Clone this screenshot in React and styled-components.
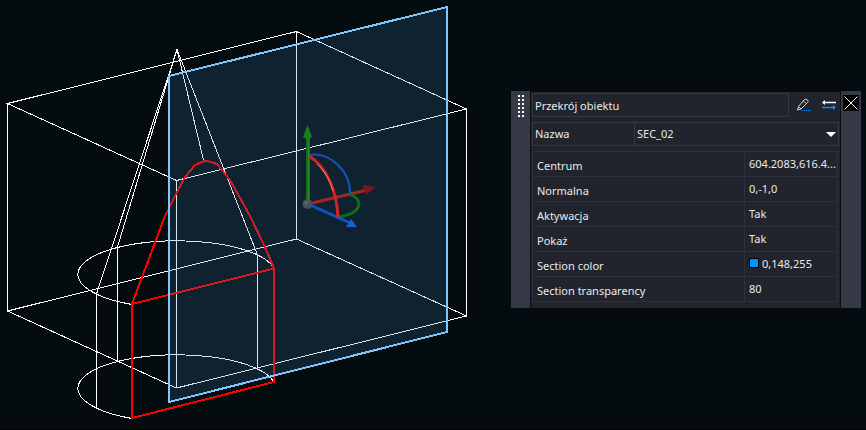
import React from "react";
import styled, { createGlobalStyle } from "styled-components";

const GlobalStyle = createGlobalStyle`
  * {
    box-sizing: border-box;
  }

  body {
    margin: 0;
    background: #040c0f;
    color: #e8eaee;
    font: 11px/16px "Noto Sans", "Open Sans", sans-serif;
  }
`;

const Viewport = styled.main`
  display: flex;
  align-items: flex-start;
  min-height: 100vh;
  padding-right: 5px;
  border-bottom: 1px solid #000;
`;

const Scene = styled.svg`
  display: block;
  flex: 1;
  min-width: 0;
  fill: none;
`;

const Wire = styled.path`
  stroke: #fff;
  stroke-width: 1;
  shape-rendering: crispEdges;
`;

const Cut = styled.path`
  stroke: #f00;
  stroke-width: 2;
  shape-rendering: crispEdges;
`;

const Plane = styled.path`
  fill: #377fb0;
  fill-opacity: 0.2;
`;

const PlaneEdge = styled.path`
  stroke: #7fc6ff;
  stroke-width: 2;
  shape-rendering: crispEdges;
`;

const Axis = styled.path`
  stroke: ${props => props.color};
  stroke-width: ${props => props.width || 3};
`;

const Palette = styled.aside`
  display: flex;
  flex: 0 0 350px;
  margin-top: 91px;
`;

const Strip = styled.div`
  display: flex;
  flex: 0 0 ${props => props.size};
  justify-content: center;
  align-items: flex-start;
  padding-top: 4px;
  background: #363a46;
`;

const Content = styled.div`
  display: flex;
  flex: 1;
  flex-direction: column;
  min-width: 0;
  gap: 5px;
  padding: 1px 1px 6px;
  border: 1px solid #0b0d11;
  border-width: 1px 1px 0;
  background: #21242c;
`;

const Header = styled.div`
  display: flex;
  align-items: center;
  gap: 5px;
`;

const TitleBox = styled.input`
  flex: 1;
  min-width: 0;
  height: 24px;
  padding: 0 2px;
  border: 1px solid #363944;
  background: transparent;
  color: inherit;
  font: inherit;
`;

const IconButton = styled.button`
  display: flex;
  justify-content: center;
  align-items: center;
  width: 20px;
  height: 20px;
  padding: 0;
  border: 0;
  background: transparent;
`;

const CloseButton = styled(IconButton)`
  width: 16px;
  height: 16px;
  background: #000;
`;

const NameRow = styled.div`
  display: flex;
  height: 24px;
  border: 1px solid #363944;
`;

const NameLabel = styled.label`
  flex: 0 0 102px;
  padding: 3px 2px;
  border-right: 1px solid #363944;
`;

const SelectBox = styled.div`
  display: grid;
  flex: 1;
  align-items: center;

  > * {
    grid-area: 1 / 1;
  }

  > svg {
    justify-self: end;
    margin-right: 2px;
    pointer-events: none;
  }
`;

const Select = styled.select`
  width: 100%;
  height: 22px;
  padding: 0 2px;
  border: 0;
  appearance: none;
  background: transparent;
  color: inherit;
  font: inherit;
`;

const Properties = styled.table`
  width: calc(100% - 1px);
  border-collapse: collapse;
  table-layout: fixed;
`;

const Name = styled.th`
  height: 25px;
  padding: 5px 4px 2px;
  border: 1px solid #2e313b;
  font-weight: 400;
  text-align: left;
`;

const Value = styled.td`
  width: 93px;
  height: 25px;
  padding: 3px 3px 4px 4px;
  border: 1px solid #2e313b;
  white-space: nowrap;
`;

const Swatch = styled.span`
  display: inline-block;
  width: 10px;
  height: 10px;
  margin-right: 3px;
  border: 1px solid #000;
  background: ${props => props.color};
`;

const rows = [
  { name: "Centrum", value: "604.2083,616.4..." },
  { name: "Normalna", value: "0,-1,0" },
  { name: "Aktywacja", value: "Tak" },
  { name: "Pokaż", value: "Tak" },
  { name: "Section color", value: "0,148,255", color: "#0094ff" },
  { name: "Section transparency", value: "80" }
];

const Gizmo = () => (
  <g>
    <Axis color="#a52525" d="M308 204L367 190" />
    <path fill="#7d1717" d="M363 185L376 187L366 195Z" />
    <Axis color="#1651b4" width="2" d="M309 155C330 151 351 172 350 194" />
    <Axis color="#0f6e12" d="M350 194C365 201 361 214 338 217" />
    <Axis color="#0b55c4" d="M308 204L350 223" />
    <path fill="#1762d0" d="M351 219L357 227L346 227Z" />
    <Axis color="#15701a" width="4" d="M308 204V136" />
    <Axis color="#2c8b31" width="1" d="M308.5 204V136" />
    <path fill="#178019" d="M307.5 125L312 137Q307 140 303 137Z" />
    <Axis color="#d12523" d="M309 156C327 167 337 191 338 218" />
    <Axis color="#f08070" width="1" d="M317 164C325 171 330 181 333 191" />
    <circle cx="307.5" cy="204" r="5" fill="#46515e" />
    <circle cx="306.5" cy="203" r="2" fill="#5a6572" />
  </g>
);

const Model = () => (
  <Scene viewBox="0 0 511 429" role="img" aria-label="Model 3D">
    <Wire d="M7.5 103.5L296.5 31.5L466.5 109L176.5 180.5Z" />
    <Wire d="M7.5 311L296.5 239L466.5 316L176.5 388Z" />
    <Wire d="M7.5 103V311M296.5 31V239M466.5 109V316M176.5 180V388" />
    <Wire d="M177 49.5L96.5 294V408M177 49.5L117.5 247V361" />
    <Wire d="M177 49.5L203.5 160M177 49.5L257.5 255V368" />
    <Wire d="M132 304.5A99 33.7 0 1 1 274 268" />
    <Wire d="M132 418.5A99 33.7 0 1 1 274 382" />
    <Cut d="M132 304L165 216L177 192L185 177L195 165L206 160.5L217 164L230 180L239 196L250 216L264 245L274 268" />
    <Cut d="M132 304L274 268.5V382L132 418Z" />
    <Plane d="M169 76L447 7V332L169 402Z" />
    <PlaneEdge d="M169 76L447 7V332L169 402Z" />
    <Gizmo />
  </Scene>
);

const Grip = () => (
  <svg width="6" height="22" fill="#fff" aria-hidden="true">
    {[0, 4, 8, 12, 16, 20].map(y => (
      <path key={y} d={`M0 ${y}h2v2h-2zM4 ${y}h2v2h-2z`} />
    ))}
  </svg>
);

const PencilIcon = () => (
  <svg width="16" height="14" fill="none">
    <path
      stroke="#d4d6d9"
      d="M1.5 12L2.5 8.5L8.5 1.5Q10 0.5 11.5 2T11.5 4.5L5 11ZM2.5 8.5L5 11M7.5 3L10 5.5"
    />
    <path stroke="#0d8dff" strokeDasharray="1 1" d="M6 12.5H15" />
  </svg>
);

const SwapIcon = () => (
  <svg width="16" height="12" fill="none">
    <path stroke="#fff" strokeWidth="1.5" d="M2 3.5H15" />
    <path fill="#fff" d="M1 3.5L4 1V6Z" />
    <path stroke="#0d8dff" strokeWidth="1.5" d="M1 8.5H13" />
    <path fill="#0d8dff" d="M15 8.5L12 6V11Z" />
  </svg>
);

const CloseIcon = () => (
  <svg width="16" height="16" stroke="#fff">
    <path d="M1.5 1.5L14.5 14.5M14.5 1.5L1.5 14.5" />
  </svg>
);

const App = () => (
  <Viewport>
    <GlobalStyle />
    <Model />
    <Palette>
      <Strip size="19px">
        <Grip />
      </Strip>
      <Content>
        <Header>
          <TitleBox aria-label="Typ obiektu" defaultValue="Przekrój obiektu" />
          <IconButton aria-label="Edytuj">
            <PencilIcon />
          </IconButton>
          <IconButton aria-label="Zamień">
            <SwapIcon />
          </IconButton>
        </Header>
        <NameRow>
          <NameLabel htmlFor="section-name">Nazwa</NameLabel>
          <SelectBox>
            <Select id="section-name" defaultValue="SEC_02">
              <option>SEC_02</option>
            </Select>
            <svg width="10" height="5" fill="#fff">
              <path d="M0 0H10L5 5Z" />
            </svg>
          </SelectBox>
        </NameRow>
        <Properties>
          <tbody>
            {rows.map(row => (
              <tr key={row.name}>
                <Name scope="row">{row.name}</Name>
                <Value>
                  {row.color && <Swatch color={row.color} />}
                  {row.value}
                </Value>
              </tr>
            ))}
          </tbody>
        </Properties>
      </Content>
      <Strip size="20px">
        <CloseButton aria-label="Zamknij">
          <CloseIcon />
        </CloseButton>
      </Strip>
    </Palette>
  </Viewport>
);

export default App;
